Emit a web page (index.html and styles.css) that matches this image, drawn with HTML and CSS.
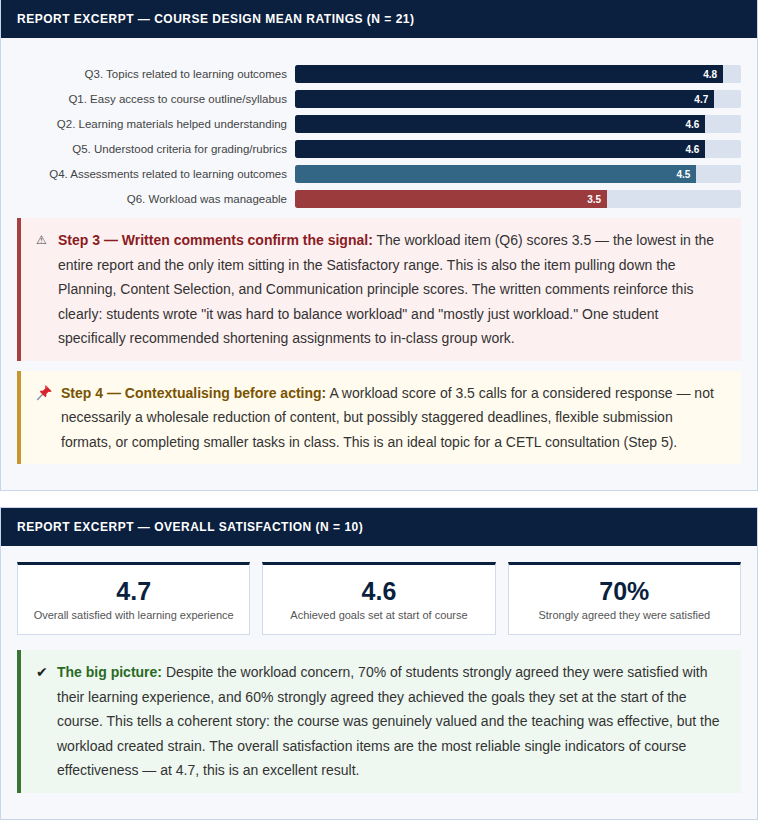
FILE: index.html
```html
<!DOCTYPE html>
<html lang="en">
<head>
<meta charset="utf-8">
<title>Report excerpts</title>
<link rel="stylesheet" href="styles.css">
</head>
<body>
<section class="panel">
  <header class="panel-head">Report Excerpt — Course Design Mean Ratings (N = 21)</header>
  <div class="panel-body">
    <div class="chart">
      <div class="row"><span class="label">Q3. Topics related to learning outcomes</span><div class="track"><div class="bar navy" style="width:96%"><span>4.8</span></div></div></div>
      <div class="row"><span class="label">Q1. Easy access to course outline/syllabus</span><div class="track"><div class="bar navy" style="width:94%"><span>4.7</span></div></div></div>
      <div class="row"><span class="label">Q2. Learning materials helped understanding</span><div class="track"><div class="bar navy" style="width:92%"><span>4.6</span></div></div></div>
      <div class="row"><span class="label">Q5. Understood criteria for grading/rubrics</span><div class="track"><div class="bar navy" style="width:92%"><span>4.6</span></div></div></div>
      <div class="row"><span class="label">Q4. Assessments related to learning outcomes</span><div class="track"><div class="bar steel" style="width:90%"><span>4.5</span></div></div></div>
      <div class="row"><span class="label">Q6. Workload was manageable</span><div class="track"><div class="bar red" style="width:70%"><span>3.5</span></div></div></div>
    </div>
    <div class="callout warn">
      <span class="icon icon-warn">⚠</span>
      <p><strong>Step 3 — Written comments confirm the signal:</strong><span> The workload item (Q6) scores 3.5 — the lowest in the entire report and the only item sitting in the Satisfactory range. This is also the item pulling down the Planning, Content Selection, and Communication principle scores. The written comments reinforce this clearly: students wrote "it was hard to balance workload" and "mostly just workload." One student specifically recommended shortening assignments to in-class group work.</span></p>
    </div>
    <div class="callout note">
      <span class="icon icon-pin"><svg width="17" height="17" viewBox="0 0 16 16" aria-hidden="true"><line x1="1.5" y1="14.5" x2="7" y2="9" stroke="#7f8fa6" stroke-width="1.3" stroke-linecap="round"/><path d="M9.2 1.2 L14.8 6.8 L13.4 7.6 L11.9 7.2 L9.6 9.5 L9.9 11.4 L8.8 12.4 L3.6 7.2 L4.6 6.1 L6.5 6.4 L8.8 4.1 L8.4 2.6 Z" fill="#d8232f"/><path d="M9.2 1.2 L11 3 L8.8 4.1 L8.4 2.6 Z" fill="#f0575f"/></svg></span>
      <p><strong>Step 4 — Contextualising before acting:</strong><span> A workload score of 3.5 calls for a considered response — not necessarily a wholesale reduction of content, but possibly staggered deadlines, flexible submission formats, or completing smaller tasks in class. This is an ideal topic for a CETL consultation (Step 5).</span></p>
    </div>
  </div>
</section>

<section class="panel">
  <header class="panel-head">Report Excerpt — Overall Satisfaction (N = 10)</header>
  <div class="panel-body">
    <div class="stats">
      <div class="stat"><div class="num">4.7</div><div class="cap">Overall satisfied with learning experience</div></div>
      <div class="stat"><div class="num">4.6</div><div class="cap">Achieved goals set at start of course</div></div>
      <div class="stat"><div class="num">70%</div><div class="cap">Strongly agreed they were satisfied</div></div>
    </div>
    <div class="callout good">
      <span class="icon icon-check">✔</span>
      <p><strong>The big picture:</strong><span> Despite the workload concern, 70% of students strongly agreed they were satisfied with their learning experience, and 60% strongly agreed they achieved the goals they set at the start of the course. This tells a coherent story: the course was genuinely valued and the teaching was effective, but the workload created strain. The overall satisfaction items are the most reliable single indicators of course effectiveness — at 4.7, this is an excellent result.</span></p>
    </div>
  </div>
</section>
</body>
</html>
```

FILE: styles.css
```css
* { box-sizing: border-box; }

html, body {
  margin: 0;
  padding: 0;
  background: #ffffff;
}

body {
  width: 758px;
  font-family: "Liberation Sans", Arial, Helvetica, sans-serif;
  color: #333333;
}

.panel {
  border: 1px solid #c9d5ea;
  border-top: none;
  background: #f6f8fc;
  margin-bottom: 16px;
}

.panel + .panel {
  border-top: 1px solid #c9d5ea;
}

.panel-head {
  background: #0b1f3f;
  color: #ffffff;
  font-weight: bold;
  font-size: 12px;
  letter-spacing: 0.5px;
  text-transform: uppercase;
  height: 38px;
  line-height: 38px;
  padding: 0 16px;
}

.panel-body {
  padding: 16px 16px 16px;
}

.chart {
  display: flex;
  flex-direction: column;
  gap: 7px;
  padding-top: 11px;
  margin-bottom: 10px;
}

.row {
  display: flex;
  align-items: center;
  gap: 8px;
  height: 18px;
}

.label {
  width: 270px;
  flex: none;
  text-align: right;
  font-size: 11.5px;
  color: #444444;
  white-space: nowrap;
}

.track {
  flex: 1;
  height: 18px;
  background: #d9e1ef;
  border-radius: 2px;
  overflow: hidden;
}

.bar {
  height: 100%;
  display: flex;
  align-items: center;
  justify-content: flex-end;
  padding-right: 6px;
  border-radius: 2px 0 0 2px;
}

.bar span {
  color: #ffffff;
  font-weight: bold;
  font-size: 10px;
}

.navy { background: #0b1f3f; }
.steel { background: #336685; }
.red { background: #9c3b3d; }

.callout {
  display: flex;
  align-items: flex-start;
  gap: 8px;
  border-left: 4px solid;
  padding: 10px 16px 10px 15px;
  margin-bottom: 10px;
  font-size: 14px;
  line-height: 24.5px;
}

.callout p {
  margin: 0;
  flex: 1;
}

.icon {
  flex: none;
  display: flex;
  align-items: center;
  height: 24.5px;
}

.icon-warn {
  width: 14px;
  font-family: "DejaVu Sans", sans-serif;
  font-size: 12px;
  color: #444444;
}

.icon-pin { width: 17px; }
.icon-pin svg { display: block; }

.icon-check {
  width: 13px;
  font-family: "DejaVu Sans", sans-serif;
  font-size: 14px;
  color: #222222;
}

.warn {
  background: #fdf0f1;
  border-left-color: #a8403f;
}
.warn strong { color: #8a1c1f; }

.note {
  background: #fffbee;
  border-left-color: #c9952f;
}
.note strong { color: #7a5300; }

.good {
  background: #eef8f0;
  border-left-color: #3a7434;
  margin-top: 15px;
}
.good strong { color: #2b6a25; }

.stats {
  display: grid;
  grid-template-columns: repeat(3, 1fr);
  gap: 12px;
}

.stat {
  background: #ffffff;
  border: 1px solid #d0dbee;
  border-top: 3px solid #0b1f3f;
  padding: 12px 8px 12px;
  text-align: center;
}

.num {
  font-size: 25px;
  font-weight: bold;
  color: #0b1f3f;
  line-height: 28px;
  margin-bottom: 4px;
}

.cap {
  font-size: 11px;
  color: #555555;
  line-height: 13px;
}
```
